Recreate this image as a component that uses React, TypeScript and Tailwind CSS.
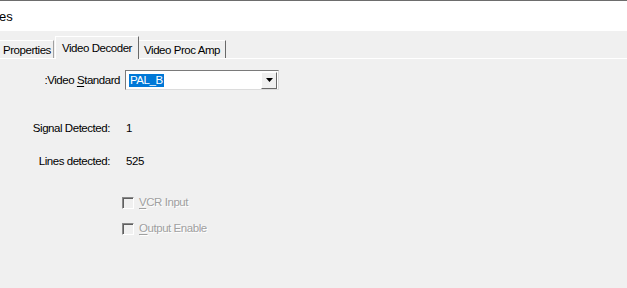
import React from "react";

const Checkbox: React.FC<{ hot: string; rest: string }> = ({ hot, rest }) => (
  <div className="flex h-[13px] items-center">
    <span className="ml-[122px] box-border h-[12px] w-[12px] border-t border-l border-r border-b border-t-[#8a8a8a] border-l-[#8a8a8a] border-r-white border-b-white bg-[#f0f0f0] shadow-[inset_1px_1px_0_#5f5f5f]"></span>
    <span className="ml-[5px] text-[#a0a0a0] [text-shadow:1px_1px_0_#ffffff]">
      <span className="underline underline-offset-2">{hot}</span>
      {rest}
    </span>
  </div>
);

export default function App() {
  return (
    <div
      className="w-[627px] h-[288px] overflow-hidden bg-[#f0f0f0] text-[11.5px] tracking-[-0.45px] leading-[13px] text-black"
      style={{ fontFamily: '"Liberation Sans", Arial, sans-serif' }}
    >
      {/* Window title */}
      <div className="h-[31px] bg-white border-t border-[#6d6d6d] flex items-center">
        <span className="ml-[-1px] text-[13px] tracking-normal">es</span>
      </div>

      {/* Tab strip */}
      <div className="relative flex h-[28px] items-end border-b border-white">
        <div className="flex h-[18px] w-[54px] items-center border-t border-r border-t-white border-r-[#a0a0a0] pl-[3px] pt-[2px]">
          Properties
        </div>
        <div className="relative z-10 -mb-px ml-[1px] flex h-[23px] w-[84px] items-start justify-center border-t border-l border-r border-t-white border-l-white border-r-[#696969] bg-[#f0f0f0] pt-[5px]">
          Video Decoder
        </div>
        <div className="flex h-[18px] w-[87px] items-center justify-center border-t border-r border-t-white border-r-[#696969] pt-[2px]">
          Video Proc Amp
        </div>
      </div>

      {/* Panel */}
      <div className="flex flex-col">
        <div className="mt-[11px] flex h-[20px] items-center">
          <div className="w-[120px] text-right">
            :Video <span className="underline underline-offset-2">S</span>tandard
          </div>
          <div className="ml-[5px] box-border flex h-[20px] w-[154px] items-center border border-t-[#7a7a7a] border-l-[#7a7a7a] border-r-[#dcdcdc] border-b-[#dcdcdc] bg-white">
            <span className="ml-[3px] flex h-[13px] items-center bg-[#0078d7] px-[1px] text-white">PAL_B</span>
            <div className="ml-auto mr-[1px] box-border flex h-[17px] w-[16px] items-center justify-center border border-t-white border-l-white border-r-[#696969] border-b-[#696969] bg-[#f0f0f0]">
              <svg width="7" height="4" viewBox="0 0 7 4">
                <path d="M0 0h7L3.5 4z" fill="#000" />
              </svg>
            </div>
          </div>
        </div>

        <div className="mt-[32px] flex h-[13px] items-center">
          <div className="w-[110px] text-right">Signal Detected:</div>
          <div className="ml-[16px]">1</div>
        </div>

        <div className="mt-[20px] flex h-[13px] items-center">
          <div className="w-[110px] text-right">Lines detected:</div>
          <div className="ml-[16px]">525</div>
        </div>

        <div className="mt-[28px]">
          <Checkbox hot="V" rest="CR Input" />
        </div>
        <div className="mt-[13px]">
          <Checkbox hot="O" rest="utput Enable" />
        </div>
      </div>
    </div>
  );
}
